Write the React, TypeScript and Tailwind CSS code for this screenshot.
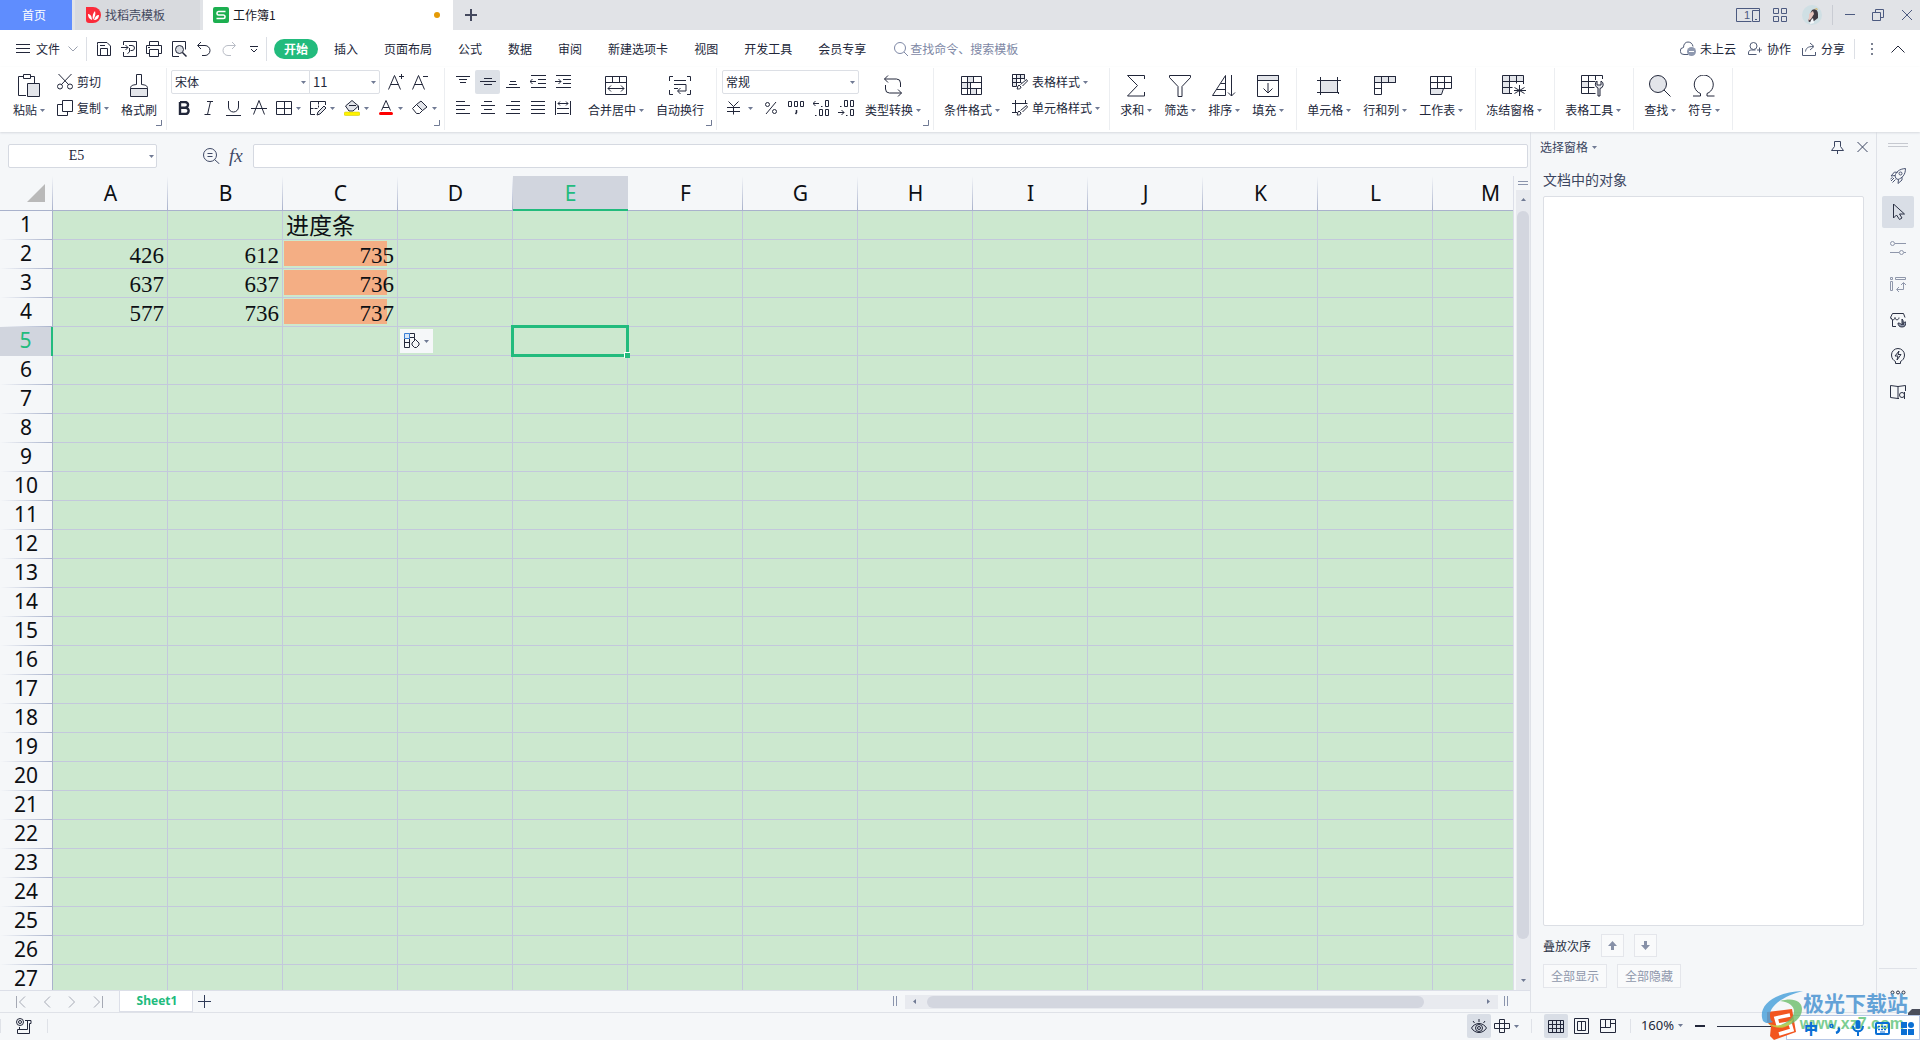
import { useState, type ReactNode } from "react"
import clsx from "clsx"

const COLUMNS = ["A", "B", "C", "D", "E", "F", "G", "H", "I", "J", "K", "L", "M"]
const ROWS = Array.from({ length: 27 }, (_, i) => i + 1)
const MENU_TABS = ["插入", "页面布局", "公式", "数据", "审阅", "新建选项卡", "视图", "开发工具", "会员专享"]

const CELLS: Record<string, string> = {
    C1: "进度条",
    A2: "426", B2: "612", C2: "735",
    A3: "637", B3: "637", C3: "736",
    A4: "577", B4: "736", C4: "737",
}

// data bar length, in percent of the column
const BARS: Record<string, number> = { C2: 90, C3: 90, C4: 90 }

type IconProps = { w?: number; h?: number; className?: string; children: ReactNode }

function Icon({ w = 16, h = 16, className, children }: IconProps) {
    return (
        <svg width={w} height={h} viewBox={`0 0 ${w} ${h}`} fill="none" stroke="currentColor" className={clsx("shrink-0", className)} aria-hidden="true">
            {children}
        </svg>
    )
}

function Caret({ className }: { className?: string }) {
    return (
        <svg width="5" height="3" viewBox="0 0 5 3" className={clsx("shrink-0 fill-[#707a94]", className)} aria-hidden="true">
            <path d="M0 0h5L2.5 3z" />
        </svg>
    )
}

function BigButton({ label, caret = true, children }: { label: string; caret?: boolean; children: ReactNode }) {
    return (
        <button type="button" className="flex flex-col items-center gap-1 px-1.5 pt-1.5">
            <span className="flex h-6 items-center">{children}</span>
            <span className="flex items-center gap-[3px] leading-4 whitespace-nowrap">
                {label}
                {caret && <Caret />}
            </span>
        </button>
    )
}

function RowButton({ label, caret = false, children }: { label: string; caret?: boolean; children: ReactNode }) {
    return (
        <button type="button" className="flex h-6 items-center px-1.5 whitespace-nowrap">
            {children}
            <span className="mr-[3px] ml-1">{label}</span>
            {caret && <Caret />}
        </button>
    )
}

function Tool({ label, active, children }: { label: string; active?: boolean; children: ReactNode }) {
    return (
        <button type="button" aria-label={label} className={clsx("flex h-6 w-[25px] items-center justify-center rounded-xs", active && "bg-[#dde1e7]")}>
            {children}
        </button>
    )
}

function DropTool({ label, children }: { label: string; children: ReactNode }) {
    return (
        <button type="button" aria-label={label} className="flex h-6 w-[34px] items-center justify-center gap-1">
            {children}
            <Caret />
        </button>
    )
}

function Group({ className, launcher, children }: { className?: string; launcher?: boolean; children: ReactNode }) {
    return (
        <div className={clsx("relative flex border-r border-[#eceef1]", className)}>
            {children}
            {launcher && (
                <button type="button" aria-label="更多设置" className="absolute right-1 bottom-1 text-[#707a94]">
                    <Icon w={6} h={6}><path d="M0 5.5h5.5V0" /></Icon>
                </button>
            )}
        </div>
    )
}

function Picker({ label, value, className }: { label: string; value: string; className: string }) {
    return (
        <label className={clsx("relative flex h-6 items-center border border-[#dcdfe5] bg-white", className)}>
            <select aria-label={label} className="size-full appearance-none bg-transparent pl-[3px] outline-none">
                <option>{value}</option>
            </select>
            <Caret className="pointer-events-none absolute right-[3px]" />
        </label>
    )
}

function TitleBar() {
    return (
        <div className="flex h-[30px] shrink-0 items-stretch bg-[#e1e3e7] text-[#44495e]">
            <button type="button" className="mr-[3px] w-[72px] bg-[#5f8dfe] pr-5 pl-4 text-white">首页</button>
            <button type="button" className="mr-[3px] flex w-[125px] items-center gap-1 bg-[#d8dade] pl-[11px]">
                <svg width="15" height="16" viewBox="0 0 15 16" aria-hidden="true">
                    <path d="M0 0h7a8 8 0 0 1 0 16H3a3 3 0 0 1-3-3z" fill="#fb2b3a" />
                    <path d="M6 13C3 12 2 10 2 7c2 0 4 2 4 6zM7 13c-1-4 0-7 2-9 1 3 0 6-2 9zm1 0c1-3 2-5 5-5 0 3-2 5-5 5z" fill="#fff" />
                </svg>
                找稻壳模板
            </button>
            <button type="button" className="flex w-[250px] items-center bg-white pl-2.5 text-[#15171f]">
                <svg width="16" height="16" viewBox="0 0 16 16" className="mr-1" aria-hidden="true">
                    <rect width="16" height="16" rx="2" fill="#1caf50" />
                    <path d="M12.5 4.5H5.5a1.5 1.7 0 0 0 0 3.5h5a1.5 1.7 0 0 1 0 3.5h-7" fill="none" stroke="#fff" strokeWidth="1.6" />
                </svg>
                工作簿1
                <span className="mr-[13px] ml-auto size-1.5 rounded-full bg-[#e49a06]" />
            </button>
            <button type="button" aria-label="新建标签" className="w-9 pl-3">
                <Icon w={12} h={12}><path d="M6 0v12M0 6h12" strokeWidth="2" /></Icon>
            </button>
            <div className="ml-auto flex items-center pr-2 text-[#4c5a80]">
                <button type="button" aria-label="切换视图" className="mr-[13px]">
                    <Icon w={24} h={14}>
                        <path d="M15.5 13.500H.5V.5h23v13h-7v-11h7M19 11.500h2" />
                        <text x="8" y="11" fontSize="11" fontFamily="Liberation Sans" fill="currentColor" stroke="none">1</text>
                    </Icon>
                </button>
                <button type="button" aria-label="应用" className="mr-[15px]">
                    <Icon w={14} h={14}><path d="M.5.5h5v5h-5zM8.500.5h5v5h-5zM.5 8.500h5v5h-5zM8.500 8.500h5v5h-5z" /></Icon>
                </button>
                <button type="button" aria-label="账号" className="mr-2.5">
                    <svg width="20" height="20" viewBox="0 0 20 20" aria-hidden="true">
                        <circle cx="10" cy="10" r="10" fill="#cfdfe4" />
                        <path d="M10 5c3-2 6 0 6 4v4l-4 3-5 1-1-2 3-3 2-4-3 1z" fill="#3f3942" />
                        <path d="M7 9l4-3 1 3-3 5-3 2 1-4z" fill="#e8c6bf" />
                        <path d="M12 4l3-1 1 2z" fill="#d8ba74" />
                        <path d="M9 15l2-2 1 5-4 1z" fill="#f4f7fa" />
                    </svg>
                </button>
                <span className="mr-3 h-5 w-px bg-[#c9ccd3]" />
                <button type="button" aria-label="最小化" className="mr-[17px]"><Icon w={10} h={12}><path d="M0 5.500h10" /></Icon></button>
                <button type="button" aria-label="还原" className="mr-[18px]">
                    <Icon w={12} h={12}><path d="M.5 3.500h8v8h-8zM3.500 3.500v-3h8v8h-3" /></Icon>
                </button>
                <button type="button" aria-label="关闭"><Icon w={10} h={12}><path d="M0 1l10 10M10 1L0 11" /></Icon></button>
            </div>
        </div>
    )
}

function MenuBar() {
    return (
        <div className="flex h-[37px] shrink-0 items-center bg-white pt-px">
            <button type="button" className="flex items-center pl-4">
                <Icon w={14} h={12} className="mr-1.5"><path d="M0 1.500h14M0 5.500h14M0 9.500h14" /></Icon>
                文件
                <Icon w={10} h={6} className="ml-2 text-[#9aa0ae]"><path d="M.5.5L5 5 9.500.5" /></Icon>
            </button>
            <span className="mr-1 ml-2 h-6 w-px bg-[#dcdfe5]" />
            <Tool label="保存">
                <Icon><path d="M1.500 3.500v11h13V5L11 1.500H1.500zM4.500 14V7.500h7V14M4 4.500h5" /></Icon>
            </Tool>
            <Tool label="输出为PDF">
                <Icon><path d="M2.500 4V.5h13v15h-13V11M0 6.500h7M4.500 4L7 6.500 4.500 9M8 4.500h3a2 2 0 0 1 0 5H9.500M8.500 7v4l-2 1.500" /></Icon>
            </Tool>
            <Tool label="打印">
                <Icon><path d="M3.500 4.500v-4h9v4M3.500 12.500h-3v-8h15v8h-3M3.500 8.500h9v7h-9zM2 6.500h2" /></Icon>
            </Tool>
            <Tool label="打印预览">
                <Icon><path d="M8 15.500H1.500V.5h13v8" /><circle cx="8.500" cy="8.500" r="4" fill="#d9dce2" /><path d="M11.500 11.500l4 4" strokeWidth="1.500" /></Icon>
            </Tool>
            <Tool label="撤销"><Icon><path d="M5 1L1.500 4.500 5 8M2 4.500h7a5 5 0 0 1 0 10H6" /></Icon></Tool>
            <Tool label="恢复"><Icon className="text-[#b9bdc6]"><path d="M11 1l3.500 3.500L11 8M14 4.500H7a5 5 0 0 0 0 10h3" /></Icon></Tool>
            <Tool label="自定义"><Icon w={8} h={7}><path d="M0 .5h8M1 3l3 3 3-3" /></Icon></Tool>
            <span className="mr-[7px] h-6 w-px bg-[#dcdfe5]" />
            <button type="button" className="mr-[3px] h-5 rounded-full bg-[#22bb7d] px-2.5 font-bold text-white">开始</button>
            {MENU_TABS.map((tab) => (
                <button key={tab} type="button" className="px-[13px] whitespace-nowrap">{tab}</button>
            ))}
            <label className="ml-[15px] flex items-center gap-0.5 text-[#7e88a5]">
                <Icon w={14} h={14}><circle cx="6" cy="6" r="5.500" /><path d="M10 10l4 4" /></Icon>
                <input aria-label="搜索" placeholder="查找命令、搜索模板" className="w-32 outline-none placeholder:text-[#7e88a5]" />
            </label>
            <div className="ml-auto flex items-center pr-[15px] whitespace-nowrap">
                <button type="button" className="mr-3 flex items-center gap-1">
                    <Icon className="text-[#4f5a74]"><path d="M8 13.500H4a3.500 3.500 0 0 1-.5-7C3.500 3 5.500 1 8 1s4.500 1.500 5 4.500" /><circle cx="11.500" cy="10.500" r="4.500" fill="#8f99b0" stroke="none" /><path d="M9 10.500h5" stroke="#fff" /></Icon>
                    未上云
                </button>
                <button type="button" className="mr-[11px] flex items-center gap-[5px]">
                    <Icon w={14} h={14} className="text-[#4f5a74]"><circle cx="5.500" cy="4" r="3.500" /><path d="M8.500 12.500h-8V11c0-2 1-3 3-3h4M11.500 5.500v5M9 8h5" /></Icon>
                    协作
                </button>
                <button type="button" className="mr-[9px] flex items-center gap-[5px]">
                    <Icon w={14} h={14} className="text-[#4f5a74]"><path d="M.5 6v7.500h13V10M3.500 9.500C4 6 6 4.500 11 4.500M8 1l4 3.500L8 8" /></Icon>
                    分享
                </button>
                <span className="mr-4 h-5 w-px bg-[#dcdfe5]" />
                <button type="button" aria-label="更多" className="mr-[18px] text-[#7b8191]"><Icon w={2} h={12}><path d="M1 0v2M1 5v2M1 10v2" strokeWidth="2" /></Icon></button>
                <button type="button" aria-label="收起功能区"><Icon w={14} h={8}><path d="M.5 7.500L7 1l6.500 6.500" /></Icon></button>
            </div>
        </div>
    )
}

function Ribbon() {
    return (
        <div className="z-10 flex h-[65px] shrink-0 bg-white pt-px pb-0.5 shadow-[0_1px_2px_#d6d9df]">
            <Group className="pr-[3px] pl-[7px]" launcher>
                <BigButton label="粘贴">
                    <Icon w={22} h={24}>
                        <path d="M8 21.500H.5v-19H5M12 2.500h4.500V9M5.500 4.500v-4h7v4z" />
                        <path d="M9.500 9.500h12v13h-12z" fill="#e3e5ea" />
                    </Icon>
                </BigButton>
                <div className="flex flex-col gap-0.5 pt-0.5">
                    <RowButton label="剪切">
                        <Icon><path d="M1.500 0l10.500 11M14.500 0L4 11" /><circle cx="3" cy="12.500" r="2.500" /><circle cx="13" cy="12.500" r="2.500" /></Icon>
                    </RowButton>
                    <RowButton label="复制" caret>
                        <Icon><path d="M5.500.5h10v11h-10zM5.500 4.500h-5v11h10v-4" /></Icon>
                    </RowButton>
                </div>
                <BigButton label="格式刷" caret={false}>
                    <Icon w={18} h={24}>
                        <path d="M.5 14.500h17v8H.5z" fill="#e3e5ea" />
                        <path d="M.5 14.500c0-3 2-3.500 6-4V.5h5v10c4 .5 6 1 6 4" />
                    </Icon>
                </BigButton>
            </Group>

            <Group className="pr-[3px] pl-1" launcher>
                <div className="flex flex-col gap-0.5 pt-0.5">
                    <div className="flex items-center">
                        <Picker label="字体" value="宋体" className="w-[139px] rounded-l-xs" />
                        <Picker label="字号" value="11" className="-ml-px w-[71px] rounded-r-xs text-[13px]" />
                        <button type="button" aria-label="增大字号" className="ml-1 flex h-6 w-6 items-center justify-center">
                            <Icon><path d="M.5 15.500L6.500 1.500l6 14M2.500 10.500h8M11 2.500h5M13.500 0v5" /></Icon>
                        </button>
                        <button type="button" aria-label="减小字号" className="flex h-6 w-6 items-center justify-center">
                            <Icon><path d="M.5 15.500L6.500 1.500l6 14M2.500 10.500h8M11 2.500h5" /></Icon>
                        </button>
                    </div>
                    <div className="flex items-center">
                        <Tool label="加粗"><Icon w={12} h={14}><path d="M2 1h5a3 2.800 0 0 1 0 5.700H2M2 6.700h5.500a3 3 0 0 1 0 6.300H2zV1" strokeWidth="2.400" /></Icon></Tool>
                        <Tool label="倾斜"><Icon w={10} h={14}><path d="M3 .5h6M.5 13.500h6M6.500.5l-3 13" /></Icon></Tool>
                        <Tool label="下划线"><Icon w={15} h={15}><path d="M2.500 0v6a5 5 0 0 0 10 0V0M0 14.500h15" /></Icon></Tool>
                        <Tool label="删除线"><Icon><path d="M2.500 14.500L8 .5l5.500 14M0 8.500h16" /></Icon></Tool>
                        <DropTool label="边框"><Icon><path d="M.5 1.500h15v13H.5zM8.500 1.500v13M.5 8.500h15" /></Icon></DropTool>
                        <DropTool label="绘制边框">
                            <Icon><path d="M5 14.500H.5v-13h15V5" /><path d="M.5 8.500h7M8.500 1.500v6" strokeDasharray="3 1" /><path d="M7 15l1-3 6-6 2 2-6 6z" fill="#e3e5ea" /></Icon>
                        </DropTool>
                        <DropTool label="填充颜色">
                            <Icon><path d="M1.500 6L8 .5 14.500 6 9 11H5zM5 5.500h7" fill="#e3e5ea" /><path d="M14.500 6v4" /><rect y="12" width="16" height="3.500" rx="1.500" fill="#fff200" stroke="#c9c400" strokeWidth=".5" /></Icon>
                        </DropTool>
                        <DropTool label="字体颜色">
                            <Icon><path d="M3.500 10.500L8 .5l4.500 10M5 7.500h6" /><rect x="1" y="12" width="14" height="3" rx="1.500" fill="#fe0000" stroke="none" /></Icon>
                        </DropTool>
                        <DropTool label="清除">
                            <Icon><path d="M.5 8.500l4-4 6 6-3 3h-3z" /><path d="M4.500 4.500L9 1l6 6-4.500 3.500z" fill="#e3e5ea" /></Icon>
                        </DropTool>
                    </div>
                </div>
            </Group>

            <Group className="pr-1.5 pl-[5px]" launcher>
                <div className="mr-[7px] flex flex-col gap-0.5 pt-0.5">
                    <div className="flex">
                        <Tool label="顶端对齐"><Icon><path d="M1 2.500h14M4 5.500h8M5 8.500h6" /></Icon></Tool>
                        <Tool label="垂直居中" active><Icon><path d="M4 4.500h8M0 7.500h16M4 10.500h8" /></Icon></Tool>
                        <Tool label="底端对齐"><Icon><path d="M5 7.500h6M4 10.500h8M1 13.500h14" /></Icon></Tool>
                        <Tool label="减少缩进"><Icon><path d="M1 1.500h15M8 5.500h8M8 9.500h8M1 13.500h15M0 7.500h6M2.500 5L0 7.500 2.500 10" /></Icon></Tool>
                        <Tool label="增加缩进"><Icon><path d="M1 1.500h15M8 5.500h8M8 9.500h8M1 13.500h15M0 7.500h6M3.500 5L6 7.500 3.500 10" /></Icon></Tool>
                    </div>
                    <div className="flex">
                        <Tool label="左对齐"><Icon><path d="M1 1.500h9M1 5.500h14M1 9.500h9M1 13.500h14" /></Icon></Tool>
                        <Tool label="水平居中"><Icon><path d="M4 1.500h8M1 5.500h14M4 9.500h8M1 13.500h14" /></Icon></Tool>
                        <Tool label="右对齐"><Icon><path d="M6 1.500h9M1 5.500h14M6 9.500h9M1 13.500h14" /></Icon></Tool>
                        <Tool label="两端对齐"><Icon><path d="M1 1.500h14M1 5.500h14M1 9.500h14M1 13.500h14" /></Icon></Tool>
                        <Tool label="分散对齐"><Icon><path d="M.5 1v14M15.500 1v14M2 8.500h12M2 13.500h12M3 3.500h10M5 1.500L3 3.500l2 2M11 1.500l2 2-2 2" /></Icon></Tool>
                    </div>
                </div>
                <BigButton label="合并居中">
                    <Icon w={22} h={20}><path d="M.5.5h21v18H.5zM.5 6.500h21M7.500.5v6M14.500.5v6M3 12.500h16M6 9.500l-3 3 3 3M16 9.500l3 3-3 3" /></Icon>
                </BigButton>
                <BigButton label="自动换行" caret={false}>
                    <Icon w={22} h={20}><path d="M4 .5H.5V5M18 .5h3.500V5M4 18.500H.5V14M18 18.500h3.500V14M5 4.500h12M5 8.500h12M5 12.500h4M17 8.500v6.500H9M11.500 12L8.500 15l3 3" /></Icon>
                </BigButton>
            </Group>

            <Group className="pr-1.5 pl-[5px]" launcher>
                <div className="flex flex-col gap-0.5 pt-0.5">
                    <Picker label="数字格式" value="常规" className="w-[137px] rounded-xs" />
                    <div className="flex items-center">
                        <button type="button" aria-label="货币" className="flex h-6 w-9 items-center justify-center gap-2">
                            <Icon w={13} h={14}><path d="M1.500.5l5 5 5-5M6.500 5.500v8M0 6.500h13M0 10.500h13" /></Icon>
                            <Caret />
                        </button>
                        <Tool label="百分比"><Icon w={12} h={14}><circle cx="2.500" cy="3.500" r="2" /><circle cx="9.500" cy="10.500" r="2" /><path d="M11 1L1 13" /></Icon></Tool>
                        <Tool label="千位分隔"><Icon><path d="M.5 1.500h3v5h-3zM6.500 1.500h3v5h-3zM12.500 1.500h3v5h-3z" /><path d="M8.500 10v2.500L7.500 14" strokeWidth="1.500" /></Icon></Tool>
                        <Tool label="增加小数"><Icon><path d="M0 3.500h6M2.500 1L0 3.500 2.500 6M8 6.500h1.500M12.500.5h3v6h-3zM2 15.500h1.500M6.500 9.500h3v6h-3zM12.500 9.500h3v6h-3z" /></Icon></Tool>
                        <Tool label="减少小数"><Icon><path d="M2 6.500h1.500M6.500.5h3v6h-3zM12.500.5h3v6h-3zM0 12.500h6M3.500 10L6 12.500 3.500 15M8 15.500h1.500M12.500 9.500h3v6h-3z" /></Icon></Tool>
                    </div>
                </div>
                <BigButton label="类型转换">
                    <Icon w={18} h={22}><path d="M4 .5L.5 4 4 7.500M.5 4h12a4 4 0 0 1 4 4v4M14 14.500l3.500 3.500-3.500 3.500M17.500 18h-12a4 4 0 0 1-4-4v-4" /></Icon>
                </BigButton>
            </Group>

            <Group className="pr-[3px] pl-1">
                <BigButton label="条件格式">
                    <Icon w={22} h={20}>
                        <path d="M6.500.5h6v6h-6zM.5 6.500h9v6h-9zM9.500 12.500h6v6h-6z" fill="#e3e5ea" />
                        <path d="M.5.500h20v18H.5zM.5 6.500h20M.5 12.500h20M6.500.5v18M12.500.5v6M9.500 6.500v6M15.500 12.500v6" />
                    </Icon>
                </BigButton>
                <div className="flex flex-col gap-0.5 pt-0.5">
                    <RowButton label="表格样式" caret>
                        <Icon><path d="M.5.5h12v4H.5zM.5.5v12h4V.5" fill="#e3e5ea" /><path d="M.5 8.500h9M8.500.5v8M12.500.5v5M.5 4.500h12M5 15c1-1 0-3 2-4l2 2c0 2-2 2-4 2zM8.500 10.500l6-5 1 1.500-5 5" /></Icon>
                    </RowButton>
                    <RowButton label="单元格样式" caret>
                        <Icon><path d="M3.500 0v13M0 3.500h15.500M13.500 0v3M0 12.500h5M5 15c1-1 0-3 2-4l2 2c0 2-2 2-4 2zM8.500 10.500l6-5 1 1.500-5 5" /></Icon>
                    </RowButton>
                </div>
            </Group>

            <Group className="pr-1.5 pl-1">
                <BigButton label="求和">
                    <Icon w={18} h={22}><path d="M17.500 4V.5H.5l10 10-10 10.500h17V17" /></Icon>
                </BigButton>
                <BigButton label="筛选">
                    <Icon w={22} h={22}><path d="M.5.5h21v2l-8.500 9v10H9v-10l-8.500-9z" /></Icon>
                </BigButton>
                <BigButton label="排序">
                    <Icon w={24} h={22}><path d="M.5 20.500L13.500.5v20zM4.500 14.500h9M8.500 8.500h5M19.500 0v21M16 17.500l3.500 3.500 3.500-3.500" /></Icon>
                </BigButton>
                <BigButton label="填充">
                    <Icon w={22} h={22}><path d="M.5.5h21v5H.5z" fill="#e3e5ea" /><path d="M.5.5h21v21H.5zM11 8v10M6.500 13.500L11 18l4.500-4.500" /></Icon>
                </BigButton>
            </Group>

            <Group className="pr-1.5 pl-1">
                <BigButton label="单元格">
                    <Icon w={24} h={18}><path d="M3.500 3.500h17v12h-17z" fill="#e3e5ea" /><path d="M0 3.500h24M3.500 0v18M20.500 0v13M0 15.500h18M20 15.500h2M21.500 15v2" /></Icon>
                </BigButton>
                <BigButton label="行和列">
                    <Icon w={22} h={20}><path d="M.5.500h21v6H.5z" fill="#e3e5ea" /><path d="M.5.500h21v6h-14v12h-7zM7.500.5v6M14.500.5v6M.5 6.500h7M.5 12.500h7" /></Icon>
                </BigButton>
                <BigButton label="工作表">
                    <Icon w={22} h={20}><path d="M.5 12.500h13l-2 6H.5z" fill="#e3e5ea" /><path d="M.5.5h21v12H.5zM.5 6.500h21M7.500.5v12M14.500.5v12" /></Icon>
                </BigButton>
            </Group>

            <Group className="pr-1.5 pl-1">
                <BigButton label="冻结窗格">
                    <Icon w={24} h={22}><path d="M.5.5h21v6h-14v12h-7z" fill="#e3e5ea" stroke="none" /><path d="M21.500 9V.5H.5v18H10M.5 6.500h21M.5 12.500h10M7.500.5v18M14.500.5v8M17.500 10v11M12.500 12.500l10 6M22.500 12.500l-10 6M12 15.500h12" /></Icon>
                </BigButton>
            </Group>

            <Group className="pr-1.5 pl-1">
                <BigButton label="表格工具">
                    <Icon w={24} h={22}><path d="M.5 6.500h7v6h-7z" fill="#e3e5ea" /><path d="M.5.5h21V4M.5.500v18h14M.5 6.500h14M.5 12.500h13M7.500.5v18M14.500.5V5" /><path d="M17 21v-8a4 4 0 0 1-1-7v4h4V6a4 4 0 0 1-1 7.500V21z" fill="#e3e5ea" /></Icon>
                </BigButton>
            </Group>

            <Group className="pr-1.5 pl-1">
                <BigButton label="查找">
                    <Icon w={22} h={22}><circle cx="9" cy="9" r="8.500" fill="#e3e5ea" /><path d="M15 15l6.500 6.500" /></Icon>
                </BigButton>
                <BigButton label="符号">
                    <Icon w={22} h={22}><path d="M0 21h7.500v-2.500A9.500 9.500 0 1 1 14 18.500V21h7.500" /></Icon>
                </BigButton>
            </Group>
        </div>
    )
}

function FormulaBar() {
    return (
        <div className="flex h-11 shrink-0 items-center pt-2.5 pr-0.5 pb-1.5 pl-2">
            <label className="relative flex h-6 w-[149px] items-center rounded-xs border border-[#d5d9e1] bg-white">
                <input aria-label="名称框" defaultValue="E5" className="w-full bg-transparent pr-3 text-center font-['Liberation_Serif',serif] text-sm outline-none" />
                <Caret className="absolute right-0.5" />
            </label>
            <button type="button" aria-label="缩小公式" className="ml-[46px] text-[#3f4966]">
                <Icon w={17} h={16}><circle cx="7" cy="7" r="6.500" /><path d="M11.500 11.500l5 4.500M4.500 5.500h5M4.500 8.500h5" /></Icon>
            </button>
            <button type="button" aria-label="插入函数" className="mr-2.5 ml-[9px] font-['Liberation_Serif',serif] text-[19px] leading-6 text-[#3f4966] italic">fx</button>
            <input aria-label="编辑栏" className="h-6 flex-1 rounded-xs border border-[#d5d9e1] bg-white px-1 outline-none" />
        </div>
    )
}

function Grid() {
    const [active, setActive] = useState({ col: "E", row: 5 })

    return (
        <div className="relative min-w-0 flex-1 overflow-hidden border-r border-[#dcdfe8]">
            <table className="w-[1548px] table-fixed border-separate border-spacing-0 font-['Noto_Sans',sans-serif] text-[21px] leading-7 text-[#0d0f14]">
                <thead>
                    <tr>
                        <th className="h-[35px] w-[53px] border-b border-[#a9b2cc] bg-[linear-gradient(to_bottom,transparent,#a9b2cc)] bg-[length:1px_100%] bg-right bg-no-repeat p-0">
                            <svg width="18" height="18" viewBox="0 0 18 18" className="ml-[27px] fill-[#b9b9b9]" aria-hidden="true"><path d="M18 0v18H0z" /></svg>
                        </th>
                        {COLUMNS.map((col) => (
                            <th
                                key={col}
                                scope="col"
                                className={clsx(
                                    "h-[35px] w-[115px] p-0 font-normal",
                                    col === active.col
                                        ? "border-b-2 border-[#22bb7d] bg-[#d1d5de] text-[#22bb7d]"
                                        : "border-b border-[#a9b2cc] bg-[linear-gradient(to_bottom,transparent,#a9b2cc)] bg-[length:1px_100%] bg-right bg-no-repeat",
                                )}
                            >
                                {col}
                            </th>
                        ))}
                    </tr>
                </thead>
                <tbody>
                    {ROWS.map((row) => (
                        <tr key={row}>
                            <th
                                scope="row"
                                className={clsx(
                                    "h-[29px] p-0 align-top leading-[26px] font-normal",
                                    row === active.row
                                        ? "border-r-2 border-[#22bb7d] bg-[#d1d5de] text-[#22bb7d]"
                                        : "border-r border-[#a9b2cc] bg-[linear-gradient(to_right,transparent,#a9b2cc)] bg-[length:100%_1px] bg-bottom bg-no-repeat",
                                )}
                            >
                                {row}
                            </th>
                            {COLUMNS.map((col) => {
                                const id = col + row
                                return (
                                    <td
                                        key={id}
                                        onClick={() => setActive({ col, row })}
                                        className={clsx(
                                            "relative h-[29px] border-r border-b border-[#c3c8dc] bg-[#cce8cf] px-[3px] py-0 font-['Liberation_Serif','Noto_Sans_CJK_SC',serif] text-[23px]",
                                            id === "C1" ? "text-left" : "text-right",
                                        )}
                                    >
                                        {BARS[id] && <span className="absolute top-px bottom-0.5 left-px bg-[#f4ae84]" style={{ width: `${BARS[id]}%` }} />}
                                        {CELLS[id] && <span className="relative block h-7 leading-8">{CELLS[id]}</span>}
                                        {id === "D5" && (
                                            <button type="button" aria-label="粘贴选项" className="absolute top-0.5 left-0.5 flex h-6 w-[33px] items-center justify-center gap-1 bg-[#f5f7f9] text-[#22273a]">
                                                <Icon><path d="M5.500 5.500v9h-5v-9M5.500 4.500h5v-4h-5M.5 9.500h5M10.500 4.500V7" /><path d="M.5.500h5v5h-5z" fill="#dbe8f8" stroke="#3b7fd6" /><path d="M8 10l3.500-3.500L15 10v2l-2.500 2.500h-2L8 12z" /></Icon>
                                                <Caret />
                                            </button>
                                        )}
                                        {col === active.col && row === active.row && (
                                            <span className="pointer-events-none absolute -inset-0.5 z-10 border-3 border-[#22bb7d]">
                                                <span className="absolute -right-1 -bottom-1 size-1.5 border-t border-l border-white bg-[#22bb7d]" />
                                            </span>
                                        )}
                                    </td>
                                )
                            })}
                        </tr>
                    ))}
                </tbody>
            </table>
        </div>
    )
}

function VerticalScroll() {
    return (
        <div className="ml-0.5 flex w-3.5 shrink-0 flex-col items-center">
            <Icon w={10} h={14} className="text-[#8b95ad]"><path d="M0 5.500h10M0 8.500h10" /></Icon>
            <div className="flex w-full flex-1 flex-col items-center bg-[#e8eaef] pt-2 pb-2">
                <Caret className="rotate-180" />
                <span className="mt-2.5 mb-10 w-3 flex-1 rounded-full bg-[#d3d6df]" />
                <Caret />
            </div>
        </div>
    )
}

function SheetBar() {
    return (
        <div className="flex h-[22px] shrink-0 items-center border-t border-[#dcdfe8] text-[#a5a9b4]">
            <div className="flex w-[119px] items-center justify-between pr-4 pl-4">
                <button type="button" aria-label="第一张"><Icon w={10} h={12}><path d="M.5 0v12M9 .5L3.500 6 9 11.500" /></Icon></button>
                <button type="button" aria-label="上一张"><Icon w={8} h={12}><path d="M7 .5L1.500 6 7 11.500" /></Icon></button>
                <button type="button" aria-label="下一张"><Icon w={8} h={12}><path d="M1 .5L6.500 6 1 11.500" /></Icon></button>
                <button type="button" aria-label="最后一张"><Icon w={10} h={12}><path d="M9.500 0v12M1 .5L6.500 6 1 11.500" /></Icon></button>
            </div>
            <button type="button" className="h-full w-[74px] border-x border-b border-[#dcdfe8] bg-white pl-0.5 font-['Noto_Sans',sans-serif] font-bold text-[#22bb7d]">Sheet1</button>
            <button type="button" aria-label="新建工作表" className="ml-[5px] text-[#2f3a57]"><Icon w={13} h={13}><path d="M6.500 0v13M0 6.500h13" /></Icon></button>
            <Icon w={4} h={12} className="mr-2 ml-auto text-[#8b95ad]"><path d="M.5 0v10M3.500 0v10" /></Icon>
            <div className="flex h-3.5 w-[593px] items-center bg-[#e8eaef] px-[7px]">
                <Caret className="rotate-90" />
                <span className="mr-[62px] ml-2.5 h-3 flex-1 rounded-full bg-[#d3d6df]" />
                <Caret className="-rotate-90" />
            </div>
            <Icon w={4} h={12} className="mr-[22px] ml-1.5 text-[#8b95ad]"><path d="M.5 0v10M3.500 0v10" /></Icon>
        </div>
    )
}

function SelectionPane() {
    return (
        <aside className="flex w-[346px] shrink-0 flex-col border-l border-[#dfe2e8] pr-3 pl-3 text-[#3b4560]">
            <div className="-mr-1 -ml-1 flex h-[30px] items-center">
                <button type="button" className="flex items-center gap-1 pl-px">选择窗格 <Caret /></button>
                <button type="button" aria-label="固定" className="mr-[13px] ml-auto">
                    <Icon w={13} h={13}><path d="M3.500.5h6v5l3 4H.5l3-4zM6.500 9.500V13" /></Icon>
                </button>
                <button type="button" aria-label="关闭窗格"><Icon w={11} h={12}><path d="M.5 1l10 10M10.500 1l-10 10" /></Icon></button>
            </div>
            <h2 className="mt-[7px] text-sm leading-5">文档中的对象</h2>
            <div className="mt-[7px] flex-1 rounded-xs border border-[#dcdfe5] bg-white" />
            <div className="mt-2 flex items-center text-[#2b3144]">
                <span className="mr-2.5">叠放次序</span>
                <button type="button" aria-label="上移" className="mr-2.5 flex size-[23px] items-center justify-center border border-[#e4e6eb] bg-[#f9fafb]">
                    <svg width="9" height="9" viewBox="0 0 9 9" className="fill-[#8791a8]" aria-hidden="true"><path d="M4.500 0L9 5H6v4H3V5H0z" /></svg>
                </button>
                <button type="button" aria-label="下移" className="flex size-[23px] items-center justify-center border border-[#e4e6eb] bg-[#f9fafb]">
                    <svg width="9" height="9" viewBox="0 0 9 9" className="fill-[#8791a8]" aria-hidden="true"><path d="M4.500 9L0 4h3V0h3v4h3z" /></svg>
                </button>
            </div>
            <div className="mt-[7px] mb-6 flex gap-2.5 text-[#8f97ab]">
                <button type="button" className="h-6 w-16 border border-[#e4e6eb] bg-[#f9fafb]">全部显示</button>
                <button type="button" className="h-6 w-16 border border-[#e4e6eb] bg-[#f9fafb]">全部隐藏</button>
            </div>
        </aside>
    )
}

function SideTool({ label, active, className, children }: { label: string; active?: boolean; className?: string; children: ReactNode }) {
    return (
        <button type="button" aria-label={label} className={clsx("mb-1 flex size-8 shrink-0 items-center justify-center rounded-xs", active && "bg-[#d9dee6]", className)}>
            {children}
        </button>
    )
}

function SideBar() {
    return (
        <nav className="flex w-11 shrink-0 flex-col items-center border-l border-[#dfe2e8] pr-px text-[#2b3144]">
            <Icon w={20} h={28} className="text-[#c6c9d0]"><path d="M0 11.500h20M0 14.500h20" /></Icon>
            <SideTool label="快速启动" className="text-[#4b5572]">
                <Icon><path d="M6 10.500L5 8c1-4 4-7 10.500-7.500C15.500 7 12 10 8 11.500zM5 7.500L1 8l3.500-4 3 .5M8.500 11.500L8 15.500l4-3.500V9M4 10l-3 3M5.500 11.500l-3 3M2.500 9.500L.5 11" /><circle cx="10.500" cy="5.500" r="1.500" /></Icon>
            </SideTool>
            <SideTool label="选择" active>
                <Icon><path d="M3.500 0v14l3-3 3 4.500 2.500-1.500-2.500-4h5z" /></Icon>
            </SideTool>
            <SideTool label="属性" className="text-[#8f97ab]">
                <Icon><circle cx="2.500" cy="3.500" r="2" /><circle cx="11.500" cy="12.500" r="2" /><path d="M5 3.500h11M0 12.500h9M14 12.500h2" /></Icon>
            </SideTool>
            <SideTool label="透视表" className="text-[#8f97ab]">
                <Icon><path d="M.5 1.500h2v2h-2zM5.500 1.500h10v2h-10zM.5 5.500h2v9h-2zM7 13.500h6.500V7M9 11l-2.500 2.500L9 16M11 9l2.500-2.500L16 9" /></Icon>
            </SideTool>
            <SideTool label="素材">
                <Icon><path d="M2.500 8v6.500H6M2 7.500L.5 5.500l2-4h11l1.500 4M1 5.500c0 3 4 3 4 0 0 3 4 3 4 0" /><path d="M12 15c-3 0-4-2-4-4 2 0 3 1 4 2V7c2 2 1 4 1 6 0-2 1-3 3-3 0 3-1 5-4 5z" fill="#8f97ab" /></Icon>
            </SideTool>
            <SideTool label="技巧">
                <Icon><path d="M5.500 13.500v2h5v-2c2-1 4-3 4-6.500a6.500 6.500 0 0 0-13 0c0 3.500 2 5.500 4 6.500M9 3L5 8h3l-1 4 4-5.500H8z" /></Icon>
            </SideTool>
            <SideTool label="帮助">
                <Icon><path d="M8 2.500L.5 1.500v12l7.500 1zM8 14.500h1M8 2.500l7.500-1V7" /><circle cx="12" cy="11" r="2.500" /><path d="M14.500 8v7" /></Icon>
            </SideTool>
            <div className="mt-auto mb-4 flex w-[38px] justify-center border-t border-[#dfe2e8] pt-5">
                <button type="button" aria-label="更多工具" className="h-[7px]"><Icon w={16} h={7}><circle cx="2.500" cy="3.500" r="1.500" /><circle cx="8" cy="3.500" r="1.500" /><circle cx="13.500" cy="3.500" r="1.500" /></Icon></button>
            </div>
        </nav>
    )
}

function StatusBar() {
    return (
        <div className="flex h-7 shrink-0 items-center border-t border-[#dfe2e8] pr-2 pb-px">
            <span className="h-3.5 w-px bg-[#dfe2e8]" />
            <button type="button" aria-label="录制" className="mx-[15px]">
                <Icon><circle cx="4" cy="4" r="3.500" /><circle cx="4" cy="4" r="1.500" /><path d="M9 2.500h6v3h-1.500v10h-12v-4h10V3M3.500 9v2" /></Icon>
            </button>
            <span className="h-3.5 w-px bg-[#dfe2e8]" />
            <button type="button" aria-label="护眼模式" className="ml-auto flex h-6 w-6 items-center justify-center rounded-xs bg-[#d9dee6]">
                <Icon><path d="M.5 10C4 4 12 4 15.500 10 12 16 4 16 .5 10zM8 1v3M2 3l1.500 2M14 3l-1.500 2" /><circle cx="8" cy="10" r="3.500" /><circle cx="8" cy="10" r="1.500" /></Icon>
            </button>
            <button type="button" aria-label="阅读模式" className="ml-[3px] flex items-center gap-1">
                <Icon><path d="M5.500 1.500h5v13h-5zM.5 5.500h15v5H.5z" /></Icon>
                <Caret />
            </button>
            <span className="mr-3 ml-3 h-3.5 w-px bg-[#dfe2e8]" />
            <button type="button" aria-label="普通视图" className="flex h-6 w-6 items-center justify-center rounded-xs bg-[#d9dee6]">
                <Icon><path d="M.5 2.500h15v12H.5zM.5 6.500h15M.5 10.500h15M4.500 2.500v12M8.500 2.500v12M12.500 2.500v12" /></Icon>
            </button>
            <button type="button" aria-label="页面布局" className="ml-1.5"><Icon w={15}><path d="M.5.5h14v15H.5zM3.500 3.500h8v9h-8zM7.500 3.500v9" /></Icon></button>
            <button type="button" aria-label="分页预览" className="ml-[11px]"><Icon><path d="M.5 1.500h15v13H.5zM5.500 1.500v8M10.500 1.500v8M.5 9.500h10M10.500 5.500h5" /></Icon></button>
            <span className="mr-2.5 ml-3.5 h-3.5 w-px bg-[#dfe2e8]" />
            <button type="button" className="flex items-center gap-1 font-['Noto_Sans',sans-serif] text-[13px]">160% <Caret /></button>
            <button type="button" aria-label="缩小" className="ml-3"><Icon w={10} h={2}><path d="M0 1h10" strokeWidth="2" /></Icon></button>
            <input type="range" aria-label="缩放比例" min="10" max="400" defaultValue="160" className="ml-3 h-px w-[195px] appearance-none bg-[#2b3144] [&::-webkit-slider-thumb]:size-0 [&::-webkit-slider-thumb]:appearance-none" />
        </div>
    )
}

function InputMethodBar() {
    return (
        <div className="pointer-events-none absolute right-0 bottom-0 z-20 h-[52px] w-40">
            <svg width="12" height="8" viewBox="0 0 12 8" className="absolute right-0 bottom-[23px] fill-[#4b4f5c]" aria-hidden="true"><path d="M12 0v8H0V4l4-4z" /></svg>
            <div className="absolute right-0 bottom-0 h-[25px] w-[134px] border border-[#b7c8e6] bg-white" />
            <svg width="44" height="52" viewBox="0 0 44 52" className="absolute bottom-0 left-0" aria-hidden="true">
                <path d="M7 24l25-3 4 23-22 8-4-4 1-10-4-4z" fill="#f2551f" />
                <path d="M30 27l-14 3 2 7 12-2 2 7-13 4" fill="none" stroke="#fff" strokeWidth="3.500" />
                <path d="M3 33C-3 18 14 4 43 3 26 7 9 17 10 28c0 3 1 5 3 6-5 2-8 1-10-1z" fill="#4ea3dc" fillOpacity=".85" />
                <path d="M20 13c13-4 22 0 22 8 0 11-13 19-27 18 11-3 19-9 19-16 0-5-5-9-14-10z" fill="#6cbd6a" fillOpacity=".8" />
                <path d="M7 35c8 4 20 3 27-5-5 11-16 13-27 5z" fill="#c4d04a" fillOpacity=".8" />
            </svg>
            <span className="absolute top-0.5 right-3 text-[21px] leading-6 font-bold whitespace-nowrap text-[#4a94d2] opacity-85">极光下载站</span>
            <span className="absolute right-4 bottom-1.5 font-['Liberation_Sans',sans-serif] text-base leading-5 font-bold text-[#5cc277] opacity-80">www.xz7.com</span>
            <div className="absolute right-1.5 bottom-1 flex h-4 w-[110px] items-center justify-between text-[#0a6fd4]">
                <span className="text-sm leading-4 font-black">中</span>
                <Icon w={12} h={12}><circle cx="2.500" cy="4" r="1.500" strokeWidth="1.500" /><path d="M9 6c2 1 1 4-2 5" strokeWidth="2.500" /></Icon>
                <Icon w={12} h={16}><rect x="3.500" y="0" width="5" height="9" rx="2.500" fill="currentColor" stroke="none" /><path d="M1 6c0 7 10 7 10 0M6 11v5" strokeWidth="2" /></Icon>
                <Icon w={15} h={13}><rect x="1" y="1" width="13" height="11" rx="1" strokeWidth="2" /><path d="M3 4.500h9M3 7.500h9" strokeWidth="1.500" strokeDasharray="2 1" /><path d="M5 10h5" /></Icon>
                <Icon w={13} h={13}><path d="M0 0h6v6H0zM0 7h6v6H0zM7 7h6v6H7z" fill="currentColor" stroke="none" /><circle cx="10" cy="3" r="3" fill="currentColor" stroke="none" /></Icon>
            </div>
        </div>
    )
}

export default function App() {
    return (
        <div className="relative flex h-screen flex-col overflow-hidden bg-[#f5f7f9] font-['Noto_Sans_CJK_SC',sans-serif] text-xs text-[#22273a]">
            <TitleBar />
            <MenuBar />
            <Ribbon />
            <div className="flex min-h-0 flex-1">
                <main className="flex min-w-0 flex-1 flex-col">
                    <FormulaBar />
                    <div className="flex min-h-0 flex-1">
                        <Grid />
                        <VerticalScroll />
                    </div>
                    <SheetBar />
                </main>
                <SelectionPane />
                <SideBar />
            </div>
            <StatusBar />
            <InputMethodBar />
        </div>
    )
}
